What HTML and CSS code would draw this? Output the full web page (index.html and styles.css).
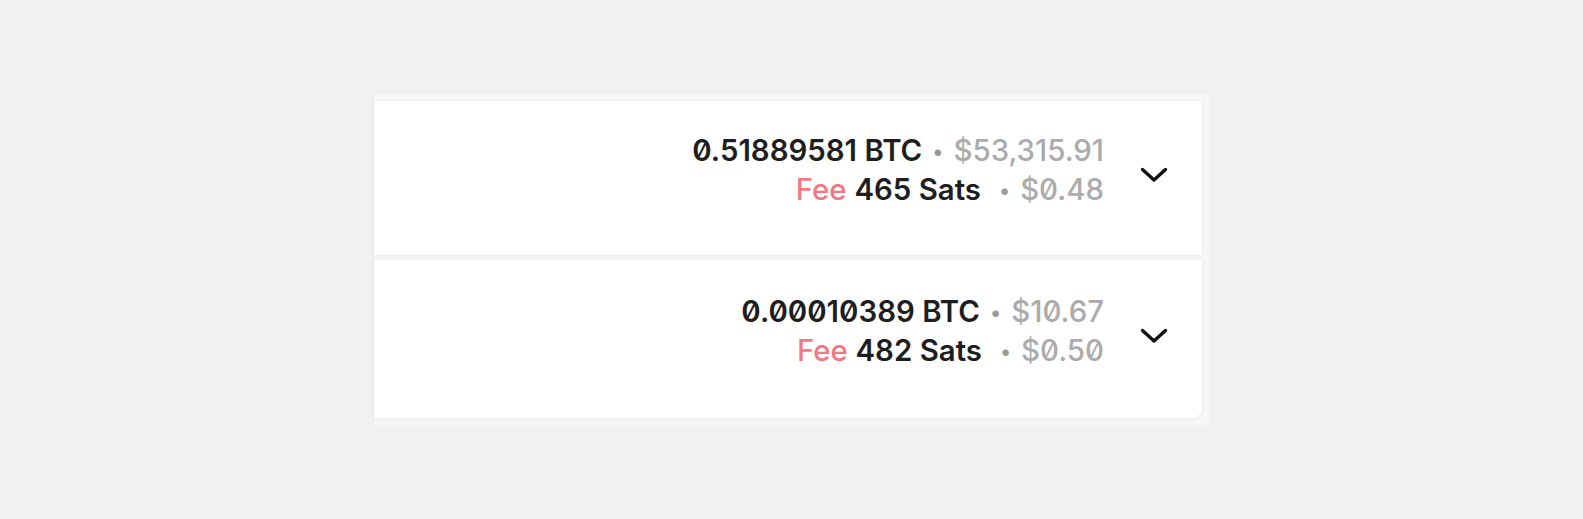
FILE: index.html
```html
<!DOCTYPE html>
<html lang="en">
<head>
<meta charset="utf-8">
<title>Transactions</title>
<link rel="stylesheet" href="styles.css">
</head>
<body>
<div class="panel">
  <div class="card">
    <div class="amounts">
      <div class="line">
        <span class="btc">0.51889581 BTC</span><span class="dot">•</span><span class="usd">$53,315.91</span>
      </div>
      <div class="line">
        <span class="fee">Fee</span> <span class="sats">465 Sats</span><span class="dot dot-wide">•</span><span class="usd">$0.48</span>
      </div>
    </div>
    <svg class="chevron" width="28" height="16" viewBox="0 0 28 16" aria-hidden="true">
      <path d="M2.5 2.5 L14 13 L25.5 2.5" fill="none" stroke="#111" stroke-width="3.4" stroke-linecap="round" stroke-linejoin="round"/>
    </svg>
  </div>
  <div class="card card-last">
    <div class="amounts">
      <div class="line">
        <span class="btc">0.00010389 BTC</span><span class="dot">•</span><span class="usd">$10.67</span>
      </div>
      <div class="line">
        <span class="fee">Fee</span> <span class="sats">482 Sats</span><span class="dot dot-wide">•</span><span class="usd">$0.50</span>
      </div>
    </div>
    <svg class="chevron" width="28" height="16" viewBox="0 0 28 16" aria-hidden="true">
      <path d="M2.5 2.5 L14 13 L25.5 2.5" fill="none" stroke="#111" stroke-width="3.4" stroke-linecap="round" stroke-linejoin="round"/>
    </svg>
  </div>
</div>
</body>
</html>
```
FILE: styles.css
```css
html, body {
  margin: 0;
  padding: 0;
}

body {
  background: #f1f1f1;
  font-family: Inter, "Noto Sans", sans-serif;
  font-feature-settings: "zero" 1;
}

.panel {
  margin: 94px 0 0 374px;
  width: 828px;
  padding: 7px 7px 7px 0;
  background: #f7f7f7;
  display: flex;
  flex-direction: column;
  gap: 5px;
}

.card {
  background: #ffffff;
  box-shadow: 0 1px 4px rgba(0, 0, 0, 0.07);
  display: flex;
  justify-content: flex-end;
  align-items: center;
  padding: 32px 34px 44px 0;
  gap: 36px;
}

.card-last {
  padding-top: 34px;
  padding-bottom: 46px;
  border-bottom-right-radius: 10px;
}

.amounts {
  display: flex;
  flex-direction: column;
  align-items: flex-end;
}

.line {
  font-size: 29.4px;
  font-weight: 500;
  line-height: 36px;
  white-space: nowrap;
  color: #1c1c1c;
}

.btc, .sats {
  font-weight: 600;
  color: #1e1e1e;
}

.fee {
  color: #f37884;
}

.dot {
  color: #9a9a9a;
  font-size: 21px;
  margin: 0 10px;
  position: relative;
  top: -2px;
}

.dot-wide {
  margin-left: 18px;
}

.usd {
  color: #ababab;
}

.chevron {
  margin-top: 6px;
  flex: none;
}
```
